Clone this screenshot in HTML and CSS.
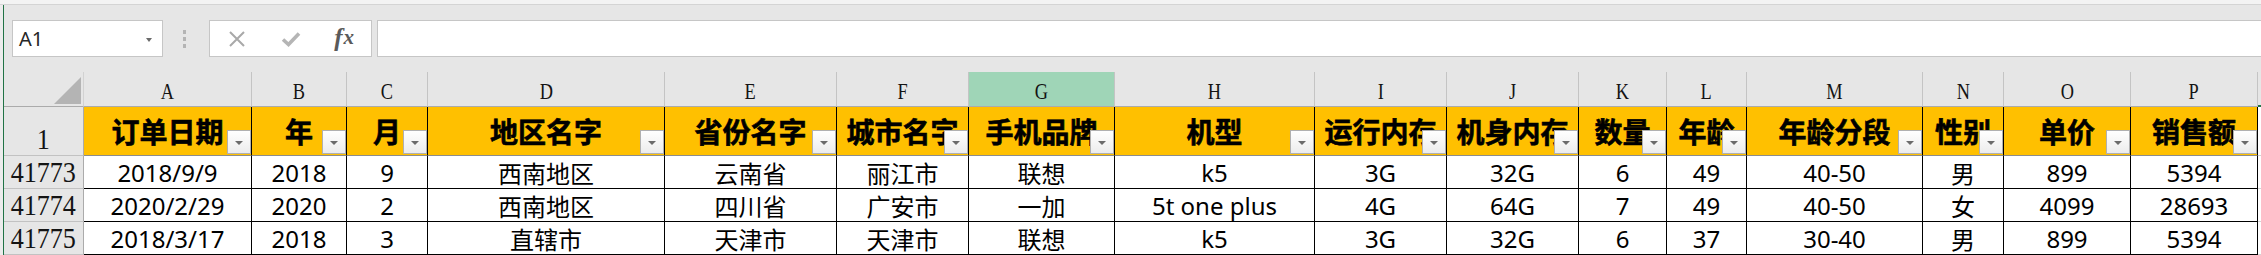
FILE: index.html
```html
<!DOCTYPE html>
<html>
<head>
	<meta charset="UTF-8">
	<title>销售数据 - Excel</title>
	<link rel="stylesheet" href="styles.css">
</head>
<body>
	<div class="topstrip"></div>
	<div class="app">
		<div class="edge"></div>
		<div class="main">
			<div class="toolbar">
				<div class="namebox"><span>A1</span><i class="drop"></i></div>
				<div class="grip"><b></b><b></b><b></b></div>
				<div class="fbtns">
					<span class="fbtn">
						<svg width="18" height="16" viewBox="0 0 18 16"><path d="M2 1 L16 15 M16 1 L2 15" stroke="#a9a9a9" stroke-width="2" fill="none"/></svg>
					</span>
					<span class="fbtn">
						<svg width="20" height="16" viewBox="0 0 20 16"><path d="M2 8.5 L7.5 13.5 L18 2.5" stroke="#b5b5b5" stroke-width="3.6" fill="none"/></svg>
					</span>
					<span class="fbtn fx"><i>f</i><i>x</i></span>
				</div>
				<div class="finput"></div>
			</div>

			<div class="sheet">
				<!-- column letters -->
				<div class="cell corner"><i class="tri"></i></div>
				<div class="cell colhd"><span>A</span></div>
				<div class="cell colhd"><span>B</span></div>
				<div class="cell colhd"><span>C</span></div>
				<div class="cell colhd"><span>D</span></div>
				<div class="cell colhd"><span>E</span></div>
				<div class="cell colhd"><span>F</span></div>
				<div class="cell colhd sel"><span>G</span></div>
				<div class="cell colhd"><span>H</span></div>
				<div class="cell colhd"><span>I</span></div>
				<div class="cell colhd"><span>J</span></div>
				<div class="cell colhd"><span>K</span></div>
				<div class="cell colhd"><span>L</span></div>
				<div class="cell colhd"><span>M</span></div>
				<div class="cell colhd"><span>N</span></div>
				<div class="cell colhd"><span>O</span></div>
				<div class="cell colhd"><span>P</span></div>
				<div class="cell colhd rest"></div>

				<!-- row 1: table header -->
				<div class="cell rowhd"><span>1</span></div>
				<div class="cell th">订单日期<i class="flt"></i></div>
				<div class="cell th">年<i class="flt"></i></div>
				<div class="cell th">月<i class="flt"></i></div>
				<div class="cell th">地区名字<i class="flt"></i></div>
				<div class="cell th">省份名字<i class="flt"></i></div>
				<div class="cell th">城市名字<i class="flt"></i></div>
				<div class="cell th">手机品牌<i class="flt"></i></div>
				<div class="cell th">机型<i class="flt"></i></div>
				<div class="cell th">运行内存<i class="flt"></i></div>
				<div class="cell th">机身内存<i class="flt"></i></div>
				<div class="cell th">数量<i class="flt"></i></div>
				<div class="cell th">年龄<i class="flt"></i></div>
				<div class="cell th">年龄分段<i class="flt"></i></div>
				<div class="cell th">性别<i class="flt"></i></div>
				<div class="cell th">单价<i class="flt"></i></div>
				<div class="cell th">销售额<i class="flt"></i></div>
				<div class="cell blank"></div>

				<div class="cell rowhd"><span>41773</span></div>
				<div class="cell td">2018/9/9</div>
				<div class="cell td">2018</div>
				<div class="cell td">9</div>
				<div class="cell td">西南地区</div>
				<div class="cell td">云南省</div>
				<div class="cell td">丽江市</div>
				<div class="cell td">联想</div>
				<div class="cell td">k5</div>
				<div class="cell td">3G</div>
				<div class="cell td">32G</div>
				<div class="cell td">6</div>
				<div class="cell td">49</div>
				<div class="cell td">40-50</div>
				<div class="cell td">男</div>
				<div class="cell td">899</div>
				<div class="cell td">5394</div>
				<div class="cell blank"></div>

				<div class="cell rowhd"><span>41774</span></div>
				<div class="cell td">2020/2/29</div>
				<div class="cell td">2020</div>
				<div class="cell td">2</div>
				<div class="cell td">西南地区</div>
				<div class="cell td">四川省</div>
				<div class="cell td">广安市</div>
				<div class="cell td">一加</div>
				<div class="cell td">5t one plus</div>
				<div class="cell td">4G</div>
				<div class="cell td">64G</div>
				<div class="cell td">7</div>
				<div class="cell td">49</div>
				<div class="cell td">40-50</div>
				<div class="cell td">女</div>
				<div class="cell td">4099</div>
				<div class="cell td">28693</div>
				<div class="cell blank"></div>

				<div class="cell rowhd"><span>41775</span></div>
				<div class="cell td">2018/3/17</div>
				<div class="cell td">2018</div>
				<div class="cell td">3</div>
				<div class="cell td">直辖市</div>
				<div class="cell td">天津市</div>
				<div class="cell td">天津市</div>
				<div class="cell td">联想</div>
				<div class="cell td">k5</div>
				<div class="cell td">3G</div>
				<div class="cell td">32G</div>
				<div class="cell td">6</div>
				<div class="cell td">37</div>
				<div class="cell td">30-40</div>
				<div class="cell td">男</div>
				<div class="cell td">899</div>
				<div class="cell td">5394</div>
				<div class="cell blank"></div>
			</div>
		</div>
	</div>
</body>
</html>
```

FILE: styles.css
```css
html, body { margin: 0; padding: 0; background: #e6e6e6; }
body { width: 2261px; height: 255px; overflow: hidden; font-family: "Noto Sans", "Noto Sans CJK SC", sans-serif; color: #000; }

.topstrip { height: 4px; background: #f3f3f3; border-bottom: 1px solid #d4d4d4; }
.app { display: flex; }
.edge { width: 3px; background: #ececec; border-right: 1px solid #217346; flex: none; }
.main { flex: 1; min-width: 0; }

/* formula bar */
.toolbar { height: 67px; box-sizing: border-box; padding: 15px 0 0 8px; display: flex; align-items: flex-start; }
.namebox { width: 151px; height: 37px; box-sizing: border-box; background: #fff; border: 1px solid #c6c6c6;
	display: flex; align-items: center; justify-content: space-between; padding: 0 10px 0 6px; }
.namebox span { font-size: 20px; color: #262626; }
.namebox .drop { width: 0; height: 0; border-left: 3.5px solid transparent; border-right: 3.5px solid transparent;
	border-top: 4px solid #6a6a6a; margin-top: 2px; }
.grip { margin: 10px 0 0 20px; width: 4px; display: flex; flex-direction: column; gap: 3px; }
.grip b { display: block; width: 3px; height: 4px; background: #b4b4b4; }
.fbtns { margin-left: 22px; width: 163px; height: 37px; box-sizing: border-box; background: #fff; border: 1px solid #c6c6c6;
	display: flex; }
.fbtn { width: 54px; display: flex; align-items: center; justify-content: center; }
.fbtn.fx { font-family: "Liberation Serif", serif; font-size: 25px; color: #5a5a5a; font-style: italic; font-weight: 700; padding-bottom: 2px; }
.fbtn.fx i:last-child { font-size: 21px; margin-left: 1px; }
.finput { margin-left: 5px; flex: 1; height: 37px; box-sizing: border-box; background: #fff; border: 1px solid #c6c6c6; border-right: 0; }

/* grid */
.sheet { display: grid;
	grid-template-columns: 80px 168px 95px 81px 237px 172px 132px 146px 200px 132px 132px 88px 80px 176px 81px 127px 127px 1fr;
	grid-template-rows: 35px 49px 33px 33px 33px; }
.cell { box-sizing: border-box; border-right: 1px solid #000; border-bottom: 1px solid #000; display: flex;
	align-items: center; justify-content: center; overflow: hidden; white-space: nowrap; position: relative; }

.corner { background: #e6e6e6; border-right-color: #d2d2d2; border-bottom-color: #ababab; }
.corner .tri { position: absolute; right: 2px; bottom: 2px; width: 0; height: 0;
	border-left: 27px solid transparent; border-bottom: 27px solid #b4b4b4; }
.colhd { background: #e6e6e6; border-right-color: #c4c4c4; border-bottom-color: #ababab; font-family: "Liberation Serif", serif;
	font-size: 23.5px; color: #141414; padding-top: 4px; }
.colhd span { display: inline-block; transform: scaleX(0.78); }
.colhd.sel { background: #9fd5b7; }
.colhd.rest { border-right: 0; border-bottom: 2px solid #217346; }

.rowhd { background: #e6e6e6; border-right-color: #ababab; border-bottom-color: #c2c2c2; font-family: "Liberation Serif", serif;
	font-size: 29px; color: #141414; align-items: flex-end; padding-bottom: 1px; line-height: 1; }
.rowhd span { display: inline-block; transform: scaleX(0.9); }

.th { background: #ffc000; font-weight: 700; font-size: 28px; border-bottom-color: #8c8c8c; -webkit-text-stroke: 0.6px #000; }
.th .flt { position: absolute; right: 0; bottom: 1px; width: 24px; height: 24px; box-sizing: border-box;
	border: 1px solid #b0b0b0; background: linear-gradient(#ffffff, #ececec); }
.th .flt::after { content: ""; position: absolute; left: 7px; top: 10px; width: 0; height: 0;
	border-left: 4px solid transparent; border-right: 4px solid transparent; border-top: 4px solid #6b6b6b; }

.td { background: #fff; font-size: 24px; }
.blank { background: #fff; border-right: 0; border-bottom-color: #d4d4d4; }
```
